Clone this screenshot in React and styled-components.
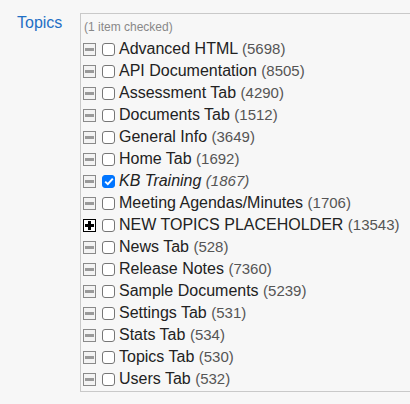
import React from 'react';
import styled, { createGlobalStyle } from 'styled-components';

const topics = [
  { name: 'Advanced HTML', count: 5698 },
  { name: 'API Documentation', count: 8505 },
  { name: 'Assessment Tab', count: 4290 },
  { name: 'Documents Tab', count: 1512 },
  { name: 'General Info', count: 3649 },
  { name: 'Home Tab', count: 1692 },
  { name: 'KB Training', count: 1867, checked: true },
  { name: 'Meeting Agendas/Minutes', count: 1706 },
  { name: 'NEW TOPICS PLACEHOLDER', count: 13543, collapsed: true },
  { name: 'News Tab', count: 528 },
  { name: 'Release Notes', count: 7360 },
  { name: 'Sample Documents', count: 5239 },
  { name: 'Settings Tab', count: 531 },
  { name: 'Stats Tab', count: 534 },
  { name: 'Topics Tab', count: 530 },
  { name: 'Users Tab', count: 532 },
];

const GlobalStyle = createGlobalStyle`
  body {
    margin: 0;
    background: #f7f7f7;
    font-family: "Liberation Sans", Arial, sans-serif;
    overflow: hidden;
  }
`;

const Field = styled.div`
  display: flex;
  align-items: flex-start;
  padding-top: 13px;
  width: 430px;
`;

const Label = styled.label`
  width: 80px;
  flex: none;
  box-sizing: border-box;
  padding: 0 0 0 17px;
  font-size: 16px;
  line-height: 20px;
  color: #1f6fc5;
`;

const TreeBox = styled.div`
  flex: none;
  width: 340px;
  border: 1px solid #c9c9c9;
  padding: 6px 0 1px 2px;
`;

const Summary = styled.div`
  font-size: 12px;
  line-height: 14px;
  color: #888;
  padding-left: 1px;
  margin-bottom: 4px;
`;

const Row = styled.div`
  display: flex;
  align-items: center;
  height: 22px;
  gap: 6px;
`;

const Check = styled.span`
  box-sizing: border-box;
  width: 13px;
  height: 13px;
  flex: none;
  border-radius: 3px;
  border: 1px solid ${(p) => (p.$checked ? '#0075ff' : '#767676')};
  background: ${(p) => (p.$checked ? '#0075ff' : '#fff')};
  display: flex;
  align-items: center;
  justify-content: center;
`;

const Name = styled.span`
  font-size: 16px;
  color: #222;
  font-style: ${(p) => (p.$checked ? 'italic' : 'normal')};
  white-space: nowrap;
  margin-left: -2px;
`;

const Count = styled.span`
  font-size: 15px;
  color: #555;
`;

function Toggle({ collapsed }) {
  const c = collapsed ? '#000' : '#8a8a8a';
  return (
    <svg width="13" height="13" viewBox="0 0 13 13" style={{ flex: 'none' }}>
      <rect x="0.5" y="0.5" width="12" height="12" fill={collapsed ? '#fff' : '#f3f3f3'} stroke={c} />
      <rect x="2" y="5" width="9" height="3" fill={collapsed ? '#000' : '#9a9a9a'} />
      {collapsed && <rect x="5" y="2" width="3" height="9" fill="#000" />}
    </svg>
  );
}

function CheckBox({ checked }) {
  return (
    <Check $checked={checked} role="checkbox" aria-checked={!!checked}>
      {checked && (
        <svg width="10" height="9" viewBox="0 0 10 9">
          <path d="M1.2 4.6 L3.8 7.1 L8.8 1.6" fill="none" stroke="#fff" strokeWidth="2" />
        </svg>
      )}
    </Check>
  );
}

export default function App() {
  const checkedCount = topics.filter((t) => t.checked).length;
  return (
    <>
      <GlobalStyle />
      <Field>
        <Label>Topics</Label>
        <TreeBox>
          <Summary>({checkedCount} item checked)</Summary>
          {topics.map((t) => (
            <Row key={t.name}>
              <Toggle collapsed={t.collapsed} />
              <CheckBox checked={t.checked} />
              <Name $checked={t.checked}>
                {t.name} <Count>({t.count})</Count>
              </Name>
            </Row>
          ))}
        </TreeBox>
      </Field>
    </>
  );
}
